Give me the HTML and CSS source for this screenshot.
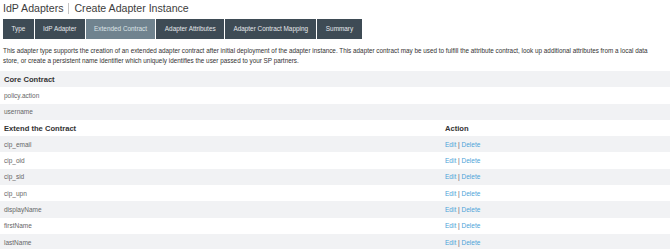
FILE: index.html
```html
<!DOCTYPE html>
<html>
<head>
<meta charset="utf-8">
<link rel="stylesheet" href="styles.css">
</head>
<body>
<div class="page">
  <h1 class="title"><span>IdP Adapters</span><span class="divider"></span><span>Create Adapter Instance</span></h1>
  <nav class="tabs">
    <span class="tab">Type</span>
    <span class="tab">IdP Adapter</span>
    <span class="tab active">Extended Contract</span>
    <span class="tab">Adapter Attributes</span>
    <span class="tab">Adapter Contract Mapping</span>
    <span class="tab">Summary</span>
  </nav>
  <p class="desc">This adapter type supports the creation of an extended adapter contract after initial deployment of the adapter instance. This adapter contract may be used to fulfill the attribute contract, look up additional attributes from a local data store, or create a persistent name identifier which uniquely identifies the user passed to your SP partners.</p>
  <div class="table">
    <div class="row head shade"><div class="c1">Core Contract</div></div>
    <div class="row"><div class="c1">policy.action</div></div>
    <div class="row shade"><div class="c1">username</div></div>
    <div class="row head"><div class="c1">Extend the Contract</div><div class="c2">Action</div></div>
    <div class="row shade"><div class="c1">cip_email</div><div class="c2"><a>Edit</a> <b>|</b> <a>Delete</a></div></div>
    <div class="row"><div class="c1">cip_oid</div><div class="c2"><a>Edit</a> <b>|</b> <a>Delete</a></div></div>
    <div class="row shade"><div class="c1">cip_sid</div><div class="c2"><a>Edit</a> <b>|</b> <a>Delete</a></div></div>
    <div class="row"><div class="c1">cip_upn</div><div class="c2"><a>Edit</a> <b>|</b> <a>Delete</a></div></div>
    <div class="row shade"><div class="c1">displayName</div><div class="c2"><a>Edit</a> <b>|</b> <a>Delete</a></div></div>
    <div class="row"><div class="c1">firstName</div><div class="c2"><a>Edit</a> <b>|</b> <a>Delete</a></div></div>
    <div class="row shade"><div class="c1">lastName</div><div class="c2"><a>Edit</a> <b>|</b> <a>Delete</a></div></div>
  </div>
</div>
</body>
</html>
```
FILE: styles.css
```css
html, body {
  margin: 0;
  padding: 0;
  background: #ffffff;
}
body {
  font-family: "Liberation Sans", Arial, sans-serif;
  color: #333;
}
.page {
  padding-top: 2px;
  height: 249px;
  box-sizing: border-box;
  overflow: hidden;
}
.title {
  margin: 0 0 0 3px;
  font-size: 10.6px;
  font-weight: normal;
  line-height: 13px;
  color: #3d3d3d;
  display: flex;
  align-items: center;
}
.divider {
  display: inline-block;
  width: 1px;
  height: 11px;
  background: #c4c4c4;
  margin: 0 5px 0 5px;
}
.tabs {
  display: flex;
  margin: 4px 0 0 3px;
  gap: 1px;
  background: #ffffff;
}
.tab {
  background: #3e4b55;
  color: #e6e9ec;
  font-size: 6.4px;
  line-height: 20px;
  padding: 0 8.4px;
  white-space: nowrap;
}
.tab.active {
  background: #70838f;
  color: #dde3e8;
}
.desc {
  margin: 7px 0 0 3px;
  font-size: 6.35px;
  line-height: 9.5px;
  color: #333;
  width: 662px;
}
.table {
  margin-top: 6px;
}
.row {
  display: flex;
  height: 16.3px;
  align-items: center;
  font-size: 6.5px;
  color: #666;
}
.row.shade {
  background: #f1f2f4;
}
.row.head {
  font-size: 7.6px;
  font-weight: bold;
  color: #333;
}
.c1 {
  width: 441px;
  padding-left: 4px;
  box-sizing: border-box;
}
.c2 {
  padding-left: 4px;
}
.c2 a {
  color: #4ba3d8;
}
.c2 b {
  font-weight: normal;
  color: #555;
}
```
